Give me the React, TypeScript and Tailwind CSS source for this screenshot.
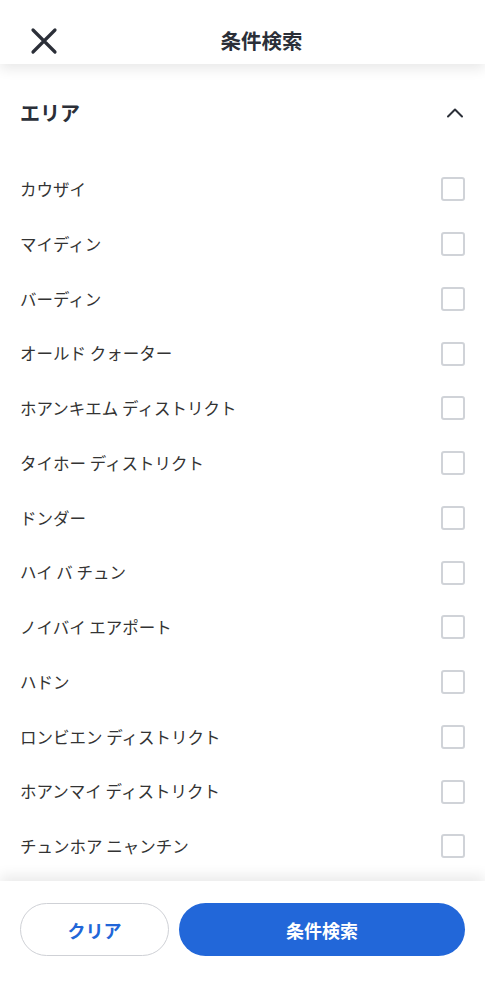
import React from "react";

const areas = [
  "カウザイ",
  "マイディン",
  "バーディン",
  "オールド クォーター",
  "ホアンキエム ディストリクト",
  "タイホー ディストリクト",
  "ドンダー",
  "ハイ バ チュン",
  "ノイバイ エアポート",
  "ハドン",
  "ロンビエン ディストリクト",
  "ホアンマイ ディストリクト",
  "チュンホア ニャンチン",
];

export default function App() {
  return (
    <div
      className="h-[999px] w-full flex flex-col overflow-hidden bg-white text-[#2b2f38]"
      style={{ fontFamily: '"Noto Sans CJK JP", "Noto Sans", sans-serif' }}
    >
      {/* header */}
      <header className="relative z-10 h-16 shrink-0 flex items-center pt-[17px] pl-[30px] pr-5 bg-white shadow-[0_5px_12px_rgba(0,0,0,0.09)]">
        <button className="w-7 h-7 shrink-0 flex items-center justify-center">
          <svg width="28" height="28" viewBox="0 0 28 28" fill="none">
            <path d="M3 3L25 25M25 3L3 25" stroke="#2b2f38" strokeWidth="3.2" strokeLinecap="round" />
          </svg>
        </button>
        <h1 className="flex-1 text-center text-[20.5px] font-bold leading-none">条件検索</h1>
      </header>

      {/* list */}
      <main className="flex-1 overflow-hidden">
        <div className="mt-5 h-[58px] px-5 flex items-center justify-between">
          <h2 className="text-[20px] font-bold">エリア</h2>
          <svg width="18" height="12" viewBox="0 0 18 12" fill="none" className="mr-[1px]">
            <path d="M2 9.5L9 2.5L16 9.5" stroke="#2b2f38" strokeWidth="2" strokeLinecap="round" strokeLinejoin="round" />
          </svg>
        </div>
        <ul className="mt-[20px]">
          {areas.map((a) => (
            <li key={a} className="h-[54.75px] px-5 flex items-center justify-between">
              <span className="text-[16.5px] text-[#333]">{a}</span>
              <span className="w-6 h-6 rounded-[3px] border-2 border-[#d0d3d8] bg-white"></span>
            </li>
          ))}
        </ul>
      </main>

      {/* footer */}
      <footer className="relative z-10 h-[118px] shrink-0 bg-white shadow-[0_-6px_12px_rgba(0,0,0,0.08)] px-5 pt-[22px] flex gap-[10px] items-start">
        <button className="w-[149px] h-[53px] rounded-full border border-[#cfd1d6] bg-white text-[18px] leading-none font-bold text-[#2166d8]">
          クリア
        </button>
        <button className="flex-1 h-[53px] rounded-full bg-[#2267d9] text-[18px] leading-none font-bold text-white">
          条件検索
        </button>
      </footer>
    </div>
  );
}
